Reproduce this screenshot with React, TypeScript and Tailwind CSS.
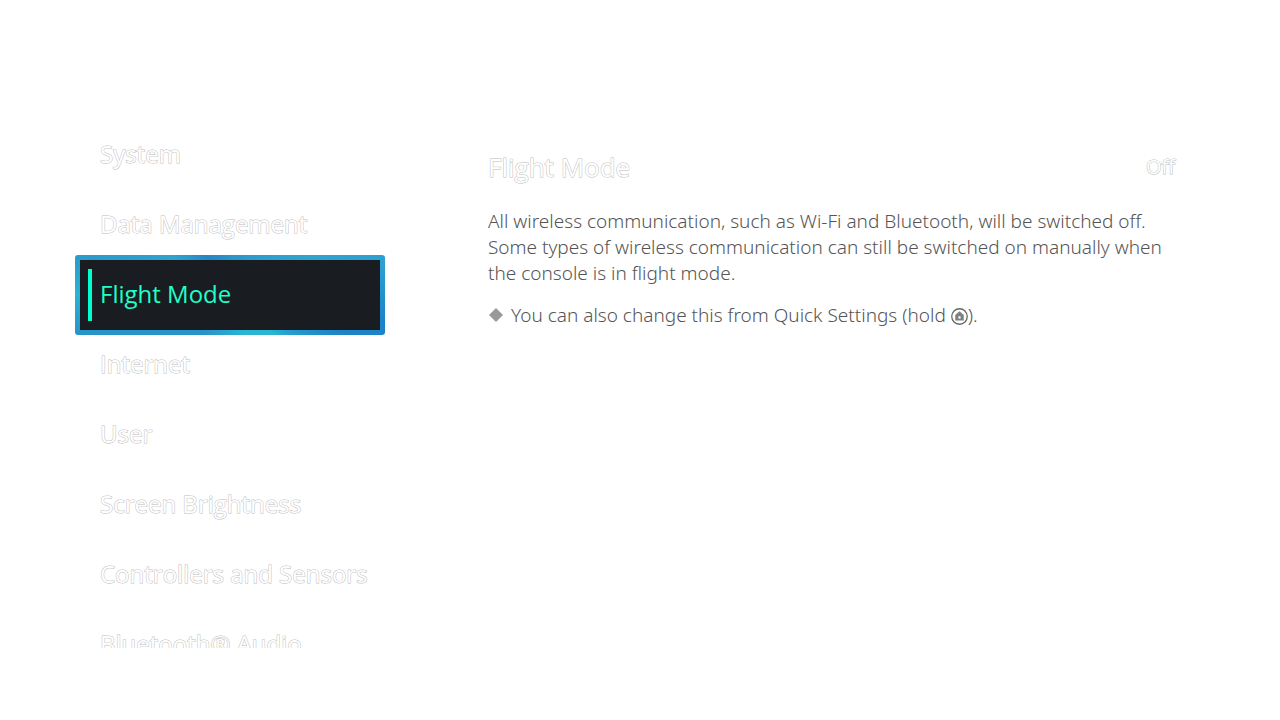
const categories: string[] = [
  "System",
  "Data Management",
  "Flight Mode",
  "Internet",
  "User",
  "Screen Brightness",
  "Controllers and Sensors",
  "Bluetooth® Audio",
];

const ghost =
  "text-white [paint-order:stroke] [-webkit-text-stroke:1px_#bdbdbd]";

function CategoryButton({ label, active }: { label: string; active: boolean }) {
  if (active) {
    return (
      <button
        type="button"
        aria-current="page"
        className="-my-[5px] block h-20 w-full shrink-0 rounded-[3px] bg-[conic-gradient(#2b94c8,#2ea4cf_18%,#2ba0cf_22%,#1b83c8_28%,#1b83c8_30%,#2ab6d2_37%,#2ab6d2_44%,#2793cc_60%,#2794cb_71%,#29b4d2_75%,#2b9bcb_79%,#2ea4cf_84%,#2587c3_91%,#2b94c8)] p-[5px] text-left text-2xl text-[#1fffc8]"
      >
        <span className="flex h-full items-center bg-[#191c21] pl-2">
          <span className="mr-2 h-[52px] w-1 bg-[#00ffcc]" />
          <span className="pb-[2px]">{label}</span>
        </span>
      </button>
    );
  }
  return (
    <button
      type="button"
      className={`block h-[70px] w-full shrink-0 pb-[2px] pl-[25px] text-left text-2xl ${ghost}`}
    >
      {label}
    </button>
  );
}

function HomeIcon() {
  return (
    <svg
      viewBox="0 0 16 16"
      role="img"
      aria-label="HOME Button"
      className="inline-block size-[17px] align-[-3px]"
    >
      <circle cx="8" cy="8" r="7.3" fill="none" stroke="#686868" strokeWidth="1.2" />
      <path d="M8 3 4 6.6v5.2h8V6.6Z" fill="#808080" />
      <path d="M7 7.8h2v2.2H7Z" fill="#fff" />
    </svg>
  );
}

export default function App() {
  return (
    <div className="flex h-screen bg-white pr-[105px] pb-[72px] pl-[75px] font-['Open_Sans',sans-serif]">
      <nav
        aria-label="System Settings"
        className="flex w-[310px] shrink-0 flex-col overflow-hidden pt-[120px]"
      >
        {categories.map((label) => (
          <CategoryButton key={label} label={label} active={label === "Flight Mode"} />
        ))}
      </nav>
      <main className="ml-[103px] flex-1 pt-[142px]">
        <button type="button" className={`flex h-[50px] w-full items-center justify-between ${ghost}`}>
          <span className="text-[26px]">Flight Mode</span>
          <span className="text-xl">Off</span>
        </button>
        <div className="mt-4 flex flex-col gap-4 font-['Noto_Sans',sans-serif] text-[19px] leading-[26px] font-light text-[#555555]">
          <p>
            All wireless communication, such as Wi-Fi and Bluetooth, will be switched off. Some
            types of wireless communication can still be switched on manually when the console is
            in flight mode.
          </p>
          <p className="flex items-center">
            <svg viewBox="0 0 14 14" aria-hidden="true" className="mr-2 ml-px size-[14px]">
              <path d="M7 0 14 7 7 14 0 7Z" fill="#999999" />
            </svg>
            <span>
              You can also change this from Quick Settings (hold <HomeIcon />
              ).
            </span>
          </p>
        </div>
      </main>
    </div>
  );
}
